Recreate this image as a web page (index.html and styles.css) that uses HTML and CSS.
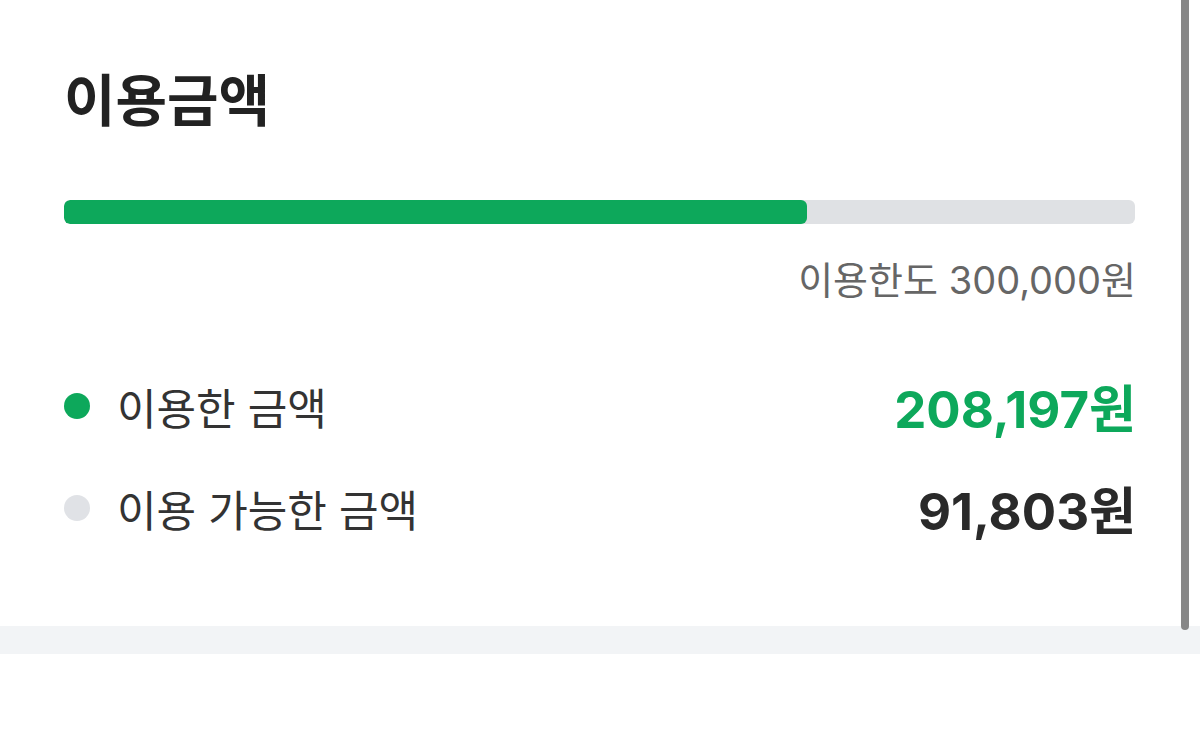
FILE: index.html
```html
<!DOCTYPE html>
<html lang="ko">
<head>
    <meta charset="UTF-8">
    <meta name="viewport" content="width=device-width, initial-scale=1.0">
    <title>이용금액</title>
    <link rel="stylesheet" href="styles.css">
</head>
<body>
    <div class="card">
        <h1 class="title">이용금액</h1>
        <div class="bar">
            <div class="bar-fill" style="width: 69.4%"></div>
        </div>
        <div class="limit">이용한도 300,000원</div>
        <div class="rows">
            <div class="row">
                <span class="dot dot-used"></span>
                <span class="label">이용한 금액</span>
                <span class="amount amount-used">208,197원</span>
            </div>
            <div class="row">
                <span class="dot dot-left"></span>
                <span class="label">이용 가능한 금액</span>
                <span class="amount">91,803원</span>
            </div>
        </div>
    </div>
    <div class="band"></div>
    <div class="scrollbar"></div>
</body>
</html>
```

FILE: styles.css
```css
body {
    margin: 0;
    background-color: #ffffff;
    font-family: "Noto Sans CJK KR", "Noto Sans", sans-serif;
    color: #333333;
}
.card {
    height: 626px;
    box-sizing: border-box;
    padding: 58px 64px 0 64px;
}
.title {
    margin: 0;
    font-size: 56px;
    line-height: 78px;
    font-weight: 700;
    color: #222222;
}
.bar {
    margin-top: 64px;
    margin-right: 1px;
    height: 24px;
    border-radius: 6px;
    background-color: #dfe1e4;
    overflow: hidden;
}
.bar-fill {
    height: 100%;
    border-radius: 6px;
    background-color: #0da85b;
}
.limit {
    margin-top: 28px;
    text-align: right;
    font-family: Inter, "Noto Sans CJK KR", sans-serif;
    font-size: 38px;
    line-height: 56px;
    color: #666666;
}
.rows {
    margin-top: 58px;
    display: flex;
    flex-direction: column;
    gap: 22px;
}
.row {
    display: flex;
    align-items: center;
    height: 80px;
}
.dot {
    width: 26px;
    height: 26px;
    border-radius: 50%;
    margin-right: 27px;
}
.dot-used {
    background-color: #0da85b;
}
.dot-left {
    background-color: #e0e2e6;
}
.label {
    flex: 1;
    font-size: 43px;
    color: #333333;
}
.amount {
    font-family: Inter, "Noto Sans CJK KR", sans-serif;
    font-size: 51px;
    font-weight: 700;
    color: #2a2a2a;
}
.amount-used {
    color: #0da85b;
}
.band {
    height: 28px;
    background-color: #f2f4f6;
}
.scrollbar {
    position: absolute;
    top: 0;
    right: 11px;
    width: 8px;
    height: 630px;
    border-radius: 0 0 4px 4px;
    background-color: #878787;
}
```
